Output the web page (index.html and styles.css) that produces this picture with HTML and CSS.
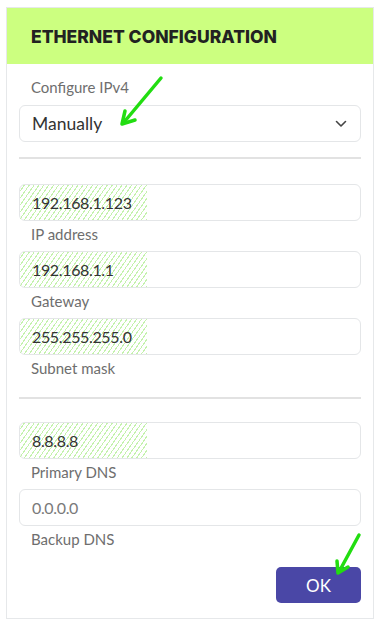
FILE: index.html
```html
<!DOCTYPE html>
<html lang="en">

<head>
    <meta charset="UTF-8">
    <meta name="viewport" content="width=device-width, initial-scale=1.0">
    <title>Ethernet Configuration</title>
    <link rel="stylesheet" href="styles.css">
</head>

<body>
    <div class="card">
        <div class="header">
            <h1>ETHERNET CONFIGURATION</h1>
        </div>
        <div class="content">
            <!--IPv4 mode-->
            <p class="label top">Configure IPv4</p>
            <div class="select">
                <span>Manually</span>
                <svg class="chevron" width="12" height="8" viewBox="0 0 12 8">
                    <path d="M1.5 1.5 L6 6 L10.5 1.5" fill="none" stroke="#444" stroke-width="1.6" stroke-linecap="round" stroke-linejoin="round" />
                </svg>
            </div>
            <hr>

            <!--Addresses-->
            <div class="field">
                <div class="input"><span class="value filled">192.168.1.123</span></div>
                <p class="label">IP address</p>
            </div>
            <div class="field">
                <div class="input"><span class="value filled">192.168.1.1</span></div>
                <p class="label">Gateway</p>
            </div>
            <div class="field">
                <div class="input"><span class="value filled">255.255.255.0</span></div>
                <p class="label">Subnet mask</p>
            </div>
            <hr class="second">

            <!--DNS-->
            <div class="field">
                <div class="input"><span class="value filled">8.8.8.8</span></div>
                <p class="label">Primary DNS</p>
            </div>
            <div class="field">
                <div class="input"><span class="value empty">0.0.0.0</span></div>
                <p class="label">Backup DNS</p>
            </div>

            <div class="actions">
                <button>OK</button>
            </div>
        </div>

        <!--annotation arrows-->
        <svg class="arrow arrow-select" width="50" height="54" viewBox="0 0 50 54">
            <path d="M44 3 L8 46" fill="none" stroke="#22dd11" stroke-width="3.5" stroke-linecap="round" />
            <path d="M5 49 L8 36 M5 49 L18 45" fill="none" stroke="#22dd11" stroke-width="3.5" stroke-linecap="round" stroke-linejoin="round" />
        </svg>
        <svg class="arrow arrow-ok" width="32" height="46" viewBox="0 0 32 46">
            <path d="M27 3 L8 38" fill="none" stroke="#22dd11" stroke-width="3.5" stroke-linecap="round" />
            <path d="M6 41 L5 29 M6 41 L16 35" fill="none" stroke="#22dd11" stroke-width="3.5" stroke-linecap="round" stroke-linejoin="round" />
        </svg>
    </div>
</body>

</html>
```

FILE: styles.css
```css
* {
    margin: 0;
    padding: 0;
    box-sizing: border-box;
    font-family: 'Lato', 'DejaVu Sans', sans-serif;
}

body {
    background: #ffffff;
    padding: 7px 6px;
}

.card {
    position: relative;
    width: 368px;
    height: 612px;
    border: 1.5px solid #e6e8ea;
    background: #fff;
}

.header {
    background: #ccff80;
    height: 56px;
    display: flex;
    align-items: center;
    padding-left: 24px;
    padding-top: 1px;
}

h1 {
    font-family: 'Inter', 'DejaVu Sans', sans-serif;
    font-size: 17.5px;
    font-weight: 800;
    color: #222;
}

.content {
    padding: 14px 12px 0 12px;
}

.label {
    font-size: 15px;
    color: #6e6e6e;
    padding-left: 12px;
    line-height: 17px;
    margin-top: 5px;
}

.label.top {
    margin-top: 1px;
    margin-bottom: 9px;
}

.select,
.input {
    height: 37px;
    border: 1px solid #e4e6e8;
    border-radius: 6px;
    display: flex;
    align-items: center;
    position: relative;
}

.select {
    justify-content: space-between;
    padding: 0 13px 0 12px;
}

.select span {
    font-size: 17.5px;
    color: #333;
}

.chevron {
    margin-top: 1px;
}

hr {
    border: none;
    border-top: 2px solid #e2e2e2;
    margin: 15px 0 25px 0;
}

hr.second {
    margin: 20px 0 23px 0;
}

.field {
    margin-bottom: 8px;
}

.value {
    font-size: 16px;
    letter-spacing: -0.35px;
    color: #333;
    height: 100%;
    display: flex;
    align-items: center;
    padding-left: 12px;
}

.value.filled {
    width: 127px;
    background: repeating-linear-gradient(-55deg, #c4f2ad 0px, #c4f2ad 1px, transparent 1px, transparent 4px);
}

.value.empty {
    color: #7a7a7a;
}

.actions {
    display: flex;
    justify-content: flex-end;
    margin-top: 19px;
}

button {
    width: 85px;
    height: 36px;
    background: #4a47a6;
    color: white;
    border: none;
    border-radius: 5px;
    font-size: 17px;
}

.arrow {
    position: absolute;
}

.arrow-select {
    left: 110px;
    top: 67px;
}

.arrow-ok {
    left: 325px;
    top: 524px;
}
```
